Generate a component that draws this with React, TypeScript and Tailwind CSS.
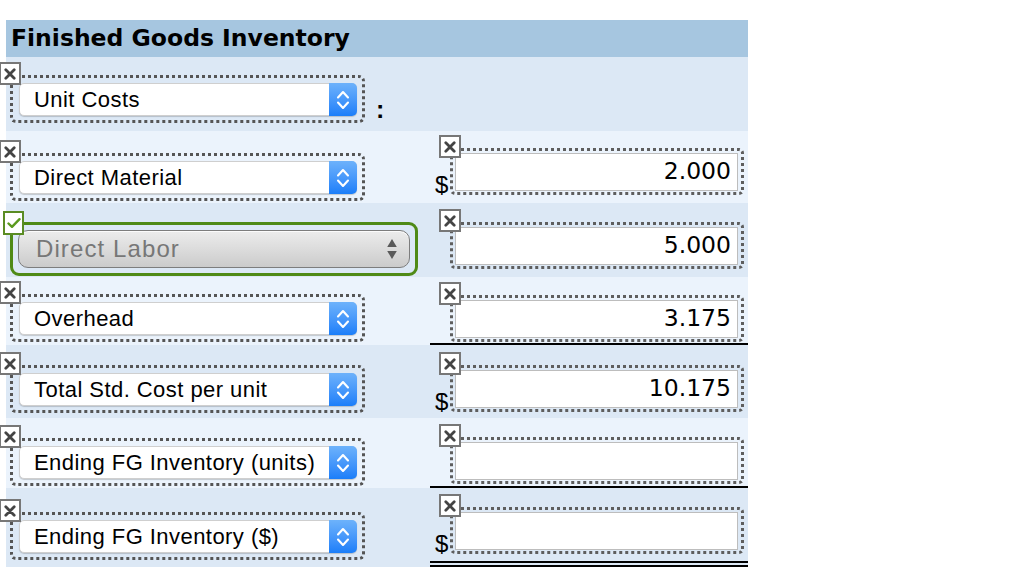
import React from "react";

function XBox({ className }: { className: string }) {
  return (
    <div
      className={`absolute z-10 w-[22px] h-[23px] border-2 border-[#777777] bg-white flex items-center justify-center ${className}`}
    >
      <svg width="12" height="12" viewBox="0 0 12 12">
        <path d="M1.8 1.8L10.2 10.2M10.2 1.8L1.8 10.2" stroke="#444444" strokeWidth="2.8" strokeLinecap="round" />
      </svg>
    </div>
  );
}

function CheckBox() {
  return (
    <div className="absolute z-10 -top-[14px] -left-[10px] w-[21px] h-[24px] border-2 border-[#5a8c23] bg-white flex items-center justify-center">
      <svg width="14" height="12" viewBox="0 0 14 12">
        <path d="M1.5 6.5L5 9.8L12.5 2.2" stroke="#5b9a1e" strokeWidth="2.4" fill="none" strokeLinecap="round" strokeLinejoin="round" />
      </svg>
    </div>
  );
}

function LabelSelect({ label }: { label: string }) {
  return (
    <div className="relative ml-[4px] w-[355px] h-[48px] border-[3px] border-dotted border-[#555555] rounded-[6px] pt-[5px] pb-[4px] pl-[6px] pr-[5px]">
      <XBox className="-top-[16px] -left-[14px]" />
      <div className="h-[33px] w-full flex bg-white rounded-[5px] border border-[#cfcfcf] shadow-[0_1px_1px_rgba(0,0,0,0.18)]">
        <div className="flex-1 flex items-center pl-[14px] text-[22px] tracking-[0.45px] text-black font-['Liberation_Sans',Arial,sans-serif] leading-none whitespace-nowrap">
          {label}
        </div>
        <div className="w-[28px] -my-px -mr-px rounded-r-[5px] bg-gradient-to-b from-[#6db2fb] to-[#1a7ef9] flex items-center justify-center">
          <svg width="14" height="24" viewBox="0 0 14 24">
            <path d="M2 9.5L7 4L12 9.5M2 14.5L7 20L12 14.5" stroke="white" strokeWidth="2.1" fill="none" strokeLinecap="round" strokeLinejoin="round" />
          </svg>
        </div>
      </div>
    </div>
  );
}

function DisabledSelect({ label }: { label: string }) {
  return (
    <div className="relative ml-[4px] w-[408px] h-[54px] border-[3px] border-[#4f8a16] rounded-[9px] pt-[5px] pl-[5px] pr-[5px]">
      <CheckBox />
      <div className="h-[38px] w-full flex items-center rounded-[10px] border-[1.5px] border-[#7d7d7d] bg-gradient-to-b from-[#ececec] via-[#dcdcdc] to-[#cbcbcb] shadow-[inset_0_1px_0_rgba(255,255,255,0.8)]">
        <div className="flex-1 pl-[17px] text-[24px] tracking-[1.1px] text-[#777777] font-['Liberation_Sans',Arial,sans-serif] leading-none">
          {label}
        </div>
        <svg width="12" height="24" viewBox="0 0 12 24" className="mr-[11px]">
          <path d="M6 2L10.8 10H1.2Z" fill="#5a5a5a" />
          <path d="M6 22L10.8 14H1.2Z" fill="#5a5a5a" />
        </svg>
      </div>
    </div>
  );
}

function ValueBox({ value, dollar }: { value: string; dollar?: boolean }) {
  return (
    <div className="flex items-end pl-[6px]">
      <span className="w-[14px] text-[24px] leading-none text-black font-['Liberation_Sans',Arial,sans-serif] mb-[-2px] ml-[-1px] mr-[1px]">
        {dollar ? "$" : ""}
      </span>
      <div className="relative w-[294px] h-[47px] border-[3px] border-dotted border-[#5e5e5e] rounded-[5px] pt-[2px] pl-[2px] pr-[3px]">
        <XBox className="-top-[16px] -left-[14px]" />
        <div className="h-[38px] w-full bg-white border border-[#bdbdbd] flex items-center justify-end pr-[6px] text-[23.5px] text-black font-['DejaVu_Sans',Verdana,sans-serif] leading-none">
          {value}
        </div>
      </div>
    </div>
  );
}

type RowProps = {
  h: string;
  bg: string;
  lt: string;
  rt?: string;
  children: React.ReactNode;
  right?: React.ReactNode;
  rightBorder?: string;
};

function Row({ h, bg, lt, rt, children, right, rightBorder }: RowProps) {
  return (
    <div className={`flex ${h} ${bg}`}>
      <div className={`w-[424px] ${lt}`}>{children}</div>
      <div className={`w-[318px] ${rt ?? ""} ${rightBorder ?? ""}`}>{right}</div>
    </div>
  );
}

export default function App() {
  const dark = "bg-[#dce8f5]";
  const light = "bg-[#ebf3fc]";
  return (
    <div className="w-[1024px] h-[585px] bg-white overflow-hidden">
      <div className="ml-[6px] mt-[20px] w-[742px]">
        <div className="h-[37px] bg-[#a6c6e0] pl-[5px] flex items-center text-[23.5px] font-bold text-black font-['DejaVu_Sans',Verdana,sans-serif] leading-none">
          Finished Goods Inventory
        </div>

        <Row h="h-[74px]" bg={dark} lt="pt-[18px]">
          <div className="flex items-end">
            <LabelSelect label="Unit Costs" />
            <span className="ml-[11px] mb-[1px] text-[25px] font-bold leading-none text-black font-['Liberation_Sans',Arial,sans-serif]">:</span>
          </div>
        </Row>

        <Row h="h-[72px]" bg={light} lt="pt-[22px]" rt="pt-[17px]" right={<ValueBox value="2.000" dollar />}>
          <LabelSelect label="Direct Material" />
        </Row>

        <Row h="h-[74px]" bg={dark} lt="pt-[19px]" rt="pt-[19px]" right={<ValueBox value="5.000" />}>
          <DisabledSelect label="Direct Labor" />
        </Row>

        <Row
          h="h-[68px]"
          bg={light}
          lt="pt-[17px]"
          rt="pt-[18px]"
          rightBorder="border-b-2 border-black"
          right={<ValueBox value="3.175" />}
        >
          <LabelSelect label="Overhead" />
        </Row>

        <Row h="h-[73px]" bg={dark} lt="pt-[20px]" rt="pt-[20px]" right={<ValueBox value="10.175" dollar />}>
          <LabelSelect label="Total Std. Cost per unit" />
        </Row>

        <Row
          h="h-[70px]"
          bg={light}
          lt="pt-[20px]"
          rt="pt-[19px]"
          rightBorder="border-b-2 border-black"
          right={<ValueBox value="" />}
        >
          <LabelSelect label="Ending FG Inventory (units)" />
        </Row>

        <Row
          h="h-[79px]"
          bg={dark}
          lt="pt-[24px]"
          rt="pt-[19px]"
          rightBorder="border-b-[6px] border-double border-black"
          right={<ValueBox value="" dollar />}
        >
          <LabelSelect label="Ending FG Inventory ($)" />
        </Row>
      </div>
    </div>
  );
}
